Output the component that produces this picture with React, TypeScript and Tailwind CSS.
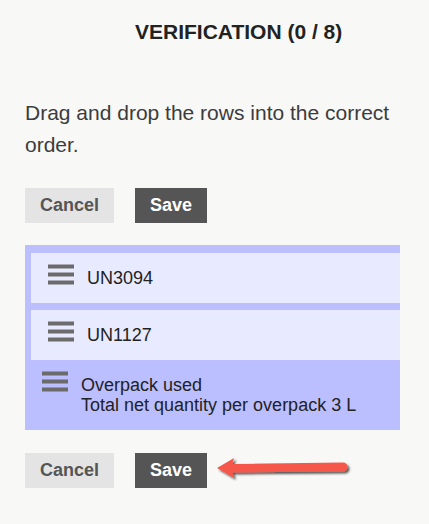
import React from 'react';

const BarsIcon: React.FC = () => (
  <svg width="26" height="22" viewBox="0 0 26 22" className="shrink-0 mt-[-4px]">
    <rect x="0" y="0.5" width="26" height="4" fill="#6b6b6b" />
    <rect x="0" y="8.5" width="26" height="4" fill="#6b6b6b" />
    <rect x="0" y="16.5" width="26" height="4" fill="#6b6b6b" />
  </svg>
);

const Row: React.FC<{ lines: string[]; className?: string }> = ({ lines, className }) => (
  <div className={`flex items-start gap-[13px] px-[17px] py-[15px] ${className ?? ''}`}>
    <BarsIcon />
    <div className="text-[18px] leading-[20px] text-[#222] whitespace-nowrap">
      {lines.map((l) => (
        <div key={l}>{l}</div>
      ))}
    </div>
  </div>
);

const Buttons: React.FC<{ arrow?: boolean }> = ({ arrow }) => (
  <div className="relative flex gap-[21px]">
    <button className="h-[35px] px-[15px] bg-[#e4e4e4] text-[#555] text-[18px] font-bold">Cancel</button>
    <button className="h-[35px] px-[15px] bg-[#555555] text-white text-[18px] font-bold">Save</button>
    {arrow && (
      <svg width="145" height="40" viewBox="0 0 145 40" className="absolute left-[185px] top-[-3px]">
        <defs>
          <filter id="sh" x="-10%" y="-30%" width="120%" height="160%">
            <feDropShadow dx="2" dy="2" stdDeviation="1.3" floodColor="#000" floodOpacity="0.65" />
          </filter>
        </defs>
        <path
          d="M7 18 L24 8 L22.5 14 L133 12.5 A4.5 4.5 0 0 1 133 21.5 L22.5 22.5 L24 28 Z"
          fill="#f5584c"
          filter="url(#sh)"
        />
      </svg>
    )}
  </div>
);

export default function App() {
  return (
    <div className="min-h-screen bg-[#f8f8f7] px-[25px] pt-[20px] font-['Liberation_Sans',Arial,sans-serif]">
      <h1 className="pl-[110px] text-[21px] leading-[24px] font-bold text-[#222] whitespace-nowrap">
        VERIFICATION (0 / 8)
      </h1>
      <p className="mt-[53px] text-[21px] leading-[32px] text-[#3c3c3c]">
        Drag and drop the rows into the correct order.
      </p>
      <div className="mt-[27px]">
        <Buttons />
      </div>
      <div className="mt-[22px] w-[375px] bg-[#bbbfff] overflow-hidden">
        <div className="flex flex-col gap-[7px] pl-[6px] pt-[8px]">
          <Row lines={['UN3094']} className="bg-[#e8eaff]" />
          <Row lines={['UN1127']} className="bg-[#e8eaff]" />
        </div>
        <Row lines={['Overpack used', 'Total net quantity per overpack 3 L']} />
      </div>
      <div className="mt-[23px]">
        <Buttons arrow />
      </div>
    </div>
  );
}
